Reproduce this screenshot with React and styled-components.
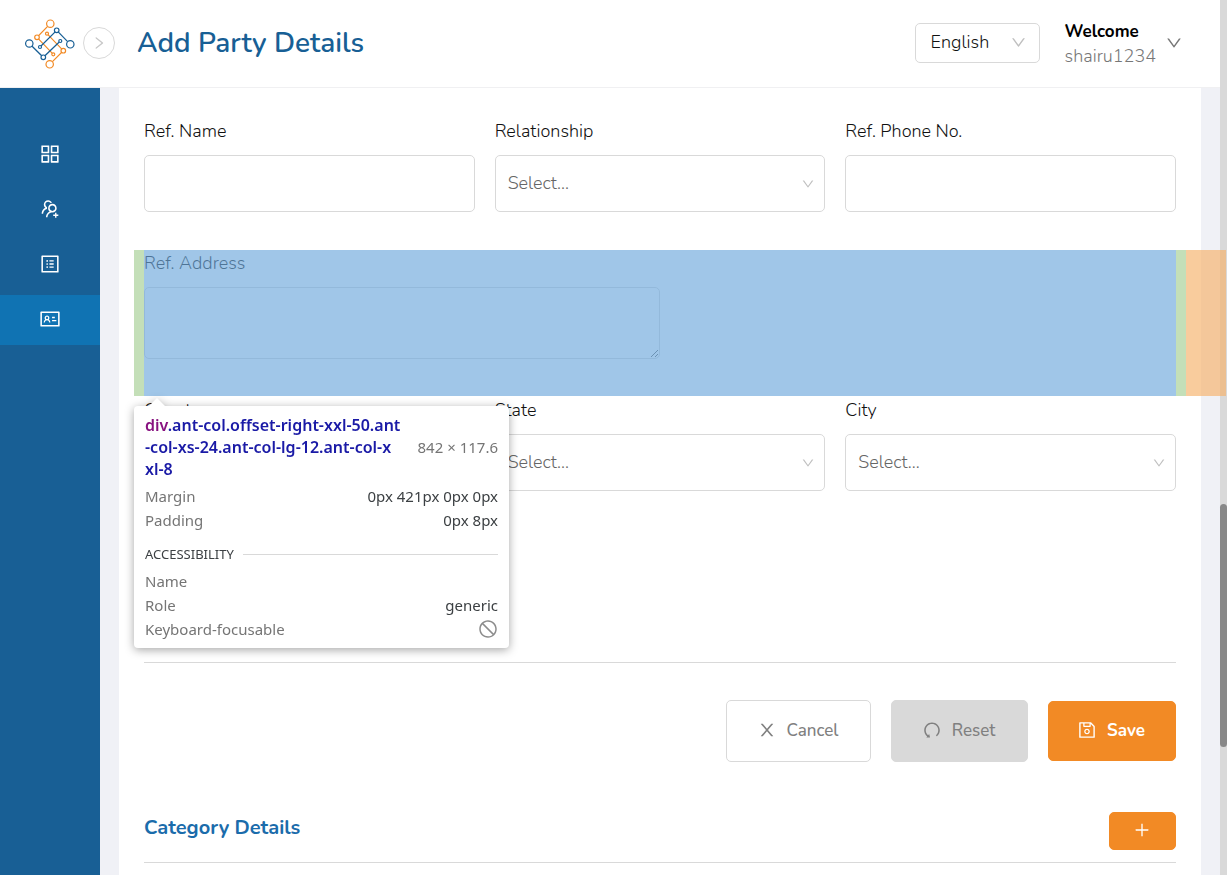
import React from "react";
import styled, { createGlobalStyle } from "styled-components";
import {
  AiOutlineAppstore,
  AiOutlineUsergroupAdd,
  AiOutlineProfile,
  AiOutlineIdcard,
  AiOutlineUndo,
  AiOutlineSave,
  AiOutlinePlus,
  AiOutlineDown,
  AiOutlineRight,
  AiOutlineStop,
} from "react-icons/ai";

const blue = "#185f95";
const orange = "#f28a25";
const line = "#d9d9d9";

const GlobalStyle = createGlobalStyle`
  *, *::before, *::after { box-sizing: border-box; }
  body {
    margin: 0;
    background: #fff;
    color: #111;
    font-family: Nunito, "Open Sans", "Noto Sans", sans-serif;
    font-size: 18px;
    font-weight: 300;
    line-height: 24px;
  }
  button, input, select, textarea { font: inherit; color: inherit; }
  svg { display: block; flex: none; }
`;

const Page = styled.div`
  display: flex;
  min-height: 100vh;
`;

const Column = styled.div`
  flex: 1;
  min-width: 0;
  display: flex;
  flex-direction: column;
`;

const ScrollTrack = styled.div`
  width: 7px;
  background: #d9d9d9;
  display: flex;
  flex-direction: column;
`;

const ScrollSpace = styled.div`
  flex: ${(p) => p.$share};
`;

const ScrollThumb = styled.div`
  height: 243px;
  border-radius: 4px;
  background: #888;
`;

const Header = styled.header`
  display: flex;
  align-items: center;
  height: 88px;
  padding: 0 37px 2px 25px;
  border-bottom: 1px solid #f0f0f2;
`;

const RoundButton = styled.button`
  display: grid;
  place-items: center;
  width: 32px;
  height: 32px;
  margin: 0 22px 0 8px;
  padding: 0;
  border: 1px solid ${line};
  border-radius: 50%;
  background: #fff;
  color: #c8c8c8;
`;

const Title = styled.h1`
  flex: 1;
  margin: 0;
  color: ${blue};
  font-size: 28px;
  line-height: 32px;
  font-weight: 600;
`;

const SelectBox = styled.span`
  display: grid;
  align-items: center;
  width: ${(p) => p.$width || "100%"};

  & > * { grid-area: 1 / 1; }
  & > svg {
    justify-self: end;
    margin-right: ${(p) => (p.$width ? 13 : 10)}px;
    color: #bfbfbf;
    pointer-events: none;
  }
`;

const Select = styled.select`
  appearance: none;
  width: 100%;
  height: ${(p) => (p.$compact ? 40 : 57)}px;
  padding: 0 ${(p) => (p.$compact ? 15 : 12)}px 2px;
  border: 1px solid ${line};
  border-radius: 5px;
  background: #fff;
  color: ${(p) => (p.$compact ? "#111" : "#666")};
`;

const UserMenu = styled.button`
  display: flex;
  align-items: center;
  gap: 9px;
  margin-left: 25px;
  padding: 0;
  border: 0;
  background: none;
  text-align: left;
  color: #777;
`;

const UserText = styled.span`
  display: grid;
  padding-top: 2px;
`;

const Welcome = styled.strong`
  color: #000;
  font-size: 17px;
  font-weight: 700;
`;

const Body = styled.div`
  flex: 1;
  display: flex;
  background: #f0f1f6;
`;

const Sidebar = styled.nav`
  display: flex;
  flex-direction: column;
  gap: 5px;
  width: 100px;
  padding-top: 42px;
  background: ${blue};
`;

const NavLink = styled.a`
  display: grid;
  place-items: center;
  height: 50px;
  padding-bottom: 2px;
  color: #fff;
  background: ${(p) => (p.$active ? "#1073b3" : "transparent")};
`;

const Panel = styled.main`
  flex: 1;
  min-width: 0;
  margin: 0 19px;
  padding: 30px 25px 12px;
  background: #fff;
`;

const FieldRow = styled.div`
  display: grid;
  grid-template-columns: repeat(3, minmax(0, 1fr));
  gap: 20px;
`;

const Field = styled.label`
  display: flex;
  flex-direction: column;
  gap: 11px;
  line-height: 26px;
`;

const TextInput = styled.input`
  width: 100%;
  height: 57px;
  padding: 0 12px;
  border: 1px solid ${line};
  border-radius: 5px;
  background: #fff;
`;

const TextArea = styled.textarea`
  width: 50%;
  height: 72px;
  padding: 8px 12px;
  border: 1px solid ${line};
  border-radius: 5px;
  background: #fff;
  resize: vertical;
`;

const Inspected = styled.div`
  position: relative;
  height: 146px;
  margin: 38px 0 1px;
`;

const Highlight = styled.div`
  position: absolute;
  z-index: 1;
  inset: 0 -50px 0 -10px;
  display: grid;
  grid-template-columns: 10px 1fr 10px 40px;
  pointer-events: none;
`;

const Shade = styled.div`
  background: ${(p) => p.$color};
`;

const Tip = styled.aside`
  position: absolute;
  z-index: 2;
  top: 156px;
  left: -10px;
  width: 375px;
  padding: 8px 11px 7px;
  border-radius: 4px;
  background: #fff;
  color: #757575;
  font-family: "Segoe UI", "Noto Sans", sans-serif;
  font-size: 15px;
  font-weight: 400;
  line-height: 24px;
  filter: drop-shadow(0 2px 5px rgba(0, 0, 0, 0.35));

  &::before {
    content: "";
    position: absolute;
    top: -8px;
    left: 15px;
    border: 8px solid transparent;
    border-top: 0;
    border-bottom-color: #fff;
  }
`;

const TipHead = styled.div`
  display: flex;
  align-items: center;
  justify-content: space-between;
  margin-bottom: 4px;
  white-space: nowrap;
`;

const Selector = styled.div`
  color: #1a1aa6;
  font-size: 16px;
  font-weight: 600;
  line-height: 22px;
  white-space: pre;
`;

const Tag = styled.span`
  color: #881280;
`;

const TipRow = styled.div`
  display: flex;
  align-items: center;
  justify-content: space-between;
  min-height: 24px;
`;

const TipValue = styled.span`
  color: #3c4043;
`;

const TipSection = styled.div`
  display: flex;
  align-items: center;
  gap: 9px;
  margin: 10px 0 3px;
  color: #3c4043;
  font-size: 13px;

  &::after {
    content: "";
    flex: 1;
    border-top: 1px solid ${line};
  }
`;

const Divider = styled.hr`
  margin: 0;
  border: 0;
  border-top: 1px solid ${line};
`;

const FormEnd = styled.div`
  padding-top: 171px;
`;

const Actions = styled.div`
  display: flex;
  align-items: center;
  justify-content: flex-end;
  gap: 20px;
  margin: 37px 0 50px;
`;

const Button = styled.button`
  display: flex;
  align-items: center;
  justify-content: center;
  gap: 10px;
  width: ${(p) => p.$width}px;
  height: ${(p) => p.$height || 62}px;
  padding: 0 2px 0 0;
  border: 1px solid ${(p) => p.$border || p.$fill};
  border-radius: 5px;
  background: ${(p) => p.$fill};
  color: ${(p) => p.$ink};
  font-size: 17px;
  font-weight: ${(p) => p.$weight || 500};

  & > svg { margin-bottom: 2px; }
`;

const SectionHead = styled.div`
  display: flex;
  align-items: flex-start;
  justify-content: space-between;
  margin-bottom: 12px;
`;

const SectionTitle = styled.h2`
  margin: 4px 0 0;
  color: #1b6cab;
  font-size: 20px;
  line-height: 24px;
  font-weight: 700;
`;

const LogoLines = styled.svg`
  overflow: visible;
  fill: #fff;
  stroke-width: 1.2;
`;

function Logo() {
  return (
    <LogoLines width="50" height="50" viewBox="25 18 50 50" aria-label="Home">
      <g stroke="#f28a25">
        <path d="M50.3 23.7 37 37.3 53.3 54.3M47 33.7 63.3 50.7 49.7 64.3" fill="none" />
      </g>
      <g stroke={blue}>
        <path d="M70.3 44.3 56.7 30.3 40 47M29.3 43.5 43.3 57.3 60.3 41" fill="none" />
        <circle cx="70.3" cy="44.3" r="3.7" />
        <circle cx="56.7" cy="30.3" r="2.3" />
        <circle cx="40" cy="47" r="1.5" />
        <circle cx="29.3" cy="43.5" r="3.7" />
        <circle cx="43.3" cy="57.3" r="2.3" />
        <circle cx="60.3" cy="41" r="1.5" />
      </g>
      <g stroke="#f28a25">
        <circle cx="50.3" cy="23.7" r="3.7" />
        <circle cx="37" cy="37.3" r="2.3" />
        <circle cx="53.3" cy="54.3" r="1.5" />
        <circle cx="47" cy="33.7" r="1.5" />
        <circle cx="63.3" cy="50.7" r="2.3" />
        <circle cx="49.7" cy="64.3" r="3.7" />
      </g>
    </LogoLines>
  );
}

function CloseIcon() {
  return (
    <svg width="20" height="20" viewBox="0 0 1024 1024" fill="currentColor" aria-hidden="true">
      <path d="M563.8 512l262.5-312.9c4.4-5.2.7-13.1-6.1-13.1h-79.8c-4.7 0-9.2 2.1-12.3 5.7L511.6 449.8 295.1 191.7c-3-3.6-7.5-5.7-12.3-5.7H203c-6.8 0-10.5 7.9-6.1 13.1L459.4 512 196.9 824.9A7.95 7.95 0 00203 838h79.8c4.7 0 9.2-2.1 12.3-5.7l216.5-258.1 216.5 258.1c3 3.6 7.5 5.7 12.3 5.7h79.8c6.8 0 10.5-7.9 6.1-13.1L563.8 512z" />
    </svg>
  );
}

function SelectField({ label }) {
  return (
    <Field>
      {label}
      <SelectBox>
        <Select>
          <option>Select...</option>
        </Select>
        <AiOutlineDown size={14} />
      </SelectBox>
    </Field>
  );
}

function InspectorTip() {
  return (
    <Tip>
      <TipHead>
        <Selector>
          <Tag>div</Tag>
          {".ant-col.offset-right-xxl-50.ant\n-col-xs-24.ant-col-lg-12.ant-col-x\nxl-8"}
        </Selector>
        <span>842 × 117.6</span>
      </TipHead>
      <TipRow>
        Margin <TipValue>0px 421px 0px 0px</TipValue>
      </TipRow>
      <TipRow>
        Padding <TipValue>0px 8px</TipValue>
      </TipRow>
      <TipSection>ACCESSIBILITY</TipSection>
      <TipRow>Name</TipRow>
      <TipRow>
        Role <TipValue>generic</TipValue>
      </TipRow>
      <TipRow>
        Keyboard-focusable <AiOutlineStop size={20} color="#8c8c8c" />
      </TipRow>
    </Tip>
  );
}

const navItems = [
  { label: "Dashboard", Icon: AiOutlineAppstore, size: 24 },
  { label: "Add user", Icon: AiOutlineUsergroupAdd, size: 22 },
  { label: "Records", Icon: AiOutlineProfile, size: 22 },
  { label: "Party details", Icon: AiOutlineIdcard, size: 22, active: true },
];

export default function App() {
  return (
    <>
      <GlobalStyle />
      <Page>
        <Column>
          <Header>
            <Logo />
            <RoundButton aria-label="Expand menu">
              <AiOutlineRight size={16} />
            </RoundButton>
            <Title>Add Party Details</Title>
            <SelectBox $width="125px">
              <Select $compact aria-label="Language">
                <option>English</option>
              </Select>
              <AiOutlineDown size={17} />
            </SelectBox>
            <UserMenu>
              <UserText>
                <Welcome>Welcome</Welcome>
                shairu1234
              </UserText>
              <AiOutlineDown size={18} />
            </UserMenu>
          </Header>
          <Body>
            <Sidebar>
              {navItems.map(({ label, Icon, size, active }) => (
                <NavLink key={label} href="#" aria-label={label} $active={active}>
                  <Icon size={size} />
                </NavLink>
              ))}
            </Sidebar>
            <Panel>
              <FieldRow>
                <Field>
                  Ref. Name
                  <TextInput />
                </Field>
                <SelectField label="Relationship" />
                <Field>
                  Ref. Phone No.
                  <TextInput type="tel" />
                </Field>
              </FieldRow>
              <Inspected>
                <Field>
                  Ref. Address
                  <TextArea />
                </Field>
                <Highlight>
                  <Shade $color="rgba(147, 196, 125, 0.55)" />
                  <Shade $color="rgba(111, 168, 220, 0.66)" />
                  <Shade $color="rgba(147, 196, 125, 0.55)" />
                  <Shade $color="rgba(246, 178, 107, 0.66)" />
                </Highlight>
                <InspectorTip />
              </Inspected>
              <FieldRow>
                <SelectField label="Country" />
                <SelectField label="State" />
                <SelectField label="City" />
              </FieldRow>
              <FormEnd>
                <Divider />
              </FormEnd>
              <Actions>
                <Button $width={145} $fill="#fff" $border={line} $ink="#808080">
                  <CloseIcon />
                  Cancel
                </Button>
                <Button $width={137} $fill="#d9d9d9" $ink="#808080">
                  <AiOutlineUndo size={20} />
                  Reset
                </Button>
                <Button $width={128} $height={60} $fill={orange} $ink="#fff" $weight={700}>
                  <AiOutlineSave size={20} />
                  Save
                </Button>
              </Actions>
              <SectionHead>
                <SectionTitle>Category Details</SectionTitle>
                <Button $width={67} $height={38} $fill={orange} $ink="#fff" aria-label="Add category">
                  <AiOutlinePlus size={18} />
                </Button>
              </SectionHead>
              <Divider />
            </Panel>
          </Body>
        </Column>
        <ScrollTrack>
          <ScrollSpace $share={504} />
          <ScrollThumb />
          <ScrollSpace $share={128} />
        </ScrollTrack>
      </Page>
    </>
  );
}
